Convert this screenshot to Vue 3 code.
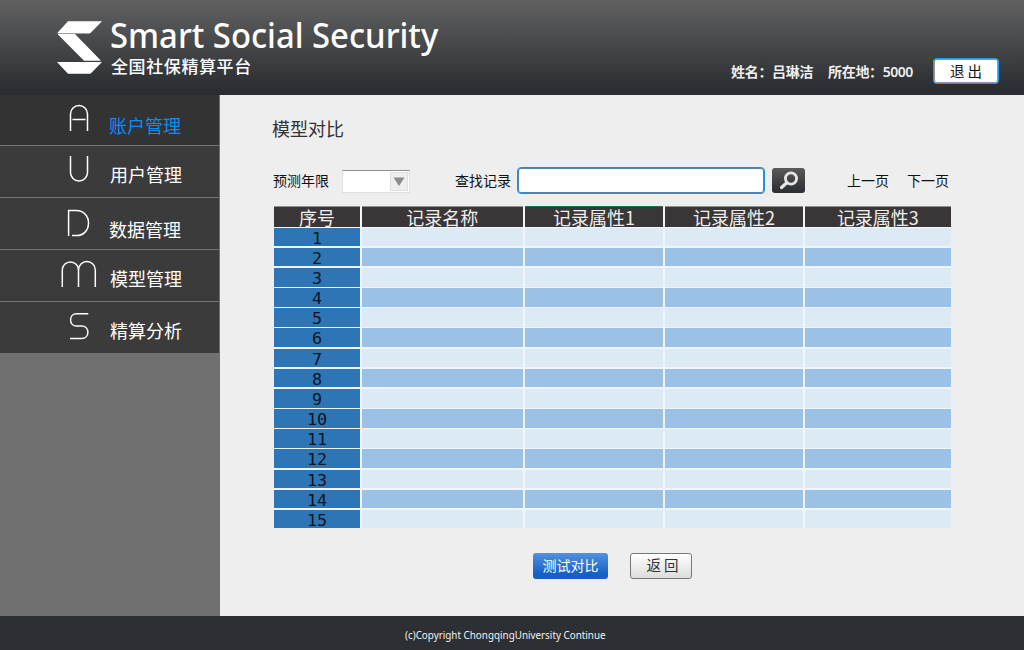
<script setup>
const menu = [
  { key: 'a', label: '账户管理', active: true, path: 'M10.500 27V10a8.500 8.500 0 0 1 17 0V27M12.500 15.500H25.500' },
  { key: 'u', label: '用户管理', path: 'M10.500 0V16.500a8.500 8.500 0 0 0 17 0V0' },
  { key: 'd', label: '数据管理', path: 'M8.600 27V1.600H16C24 1.600 28.500 7 28.500 14S24 26.500 16.500 26.500H12' },
  { key: 'm', label: '模型管理', path: 'M2.300 27V10a8.100 8.100 0 0 1 16.200 0V27M18.500 10a8.400 8.400 0 0 1 16.800 0V27' },
  { key: 's', label: '精算分析', path: 'M28.300 1.800H16.500C8.600 1.800 8.600 14 16.500 14H21.500C30 14 30 26.500 21.500 26.500H10' },
]
const headers = ['序号', '记录名称', '记录属性1', '记录属性2', '记录属性3']
</script>

<template>
  <div class="page">
    <header class="top">
      <svg class="logo" width="48" height="56" viewBox="0 0 48 56">
        <path fill="#fff" d="M12 2.300H46L34.500 14H1.300ZM1.500 15H19L45 41.800H28ZM1 43H46L34.500 54.800H12Z" />
        <path stroke="#a0a0a0" d="M2 14.500H34" />
      </svg>
      <div class="brand">
        <div class="title"><span>Smart Social Security</span></div>
        <div class="sub">全国社保精算平台</div>
      </div>
      <div class="user">
        <span class="name">姓名：吕琳洁</span>
        <span class="place">所在地：<span class="num">5000</span></span>
        <button class="exit">退 出</button>
      </div>
    </header>

    <div class="middle">
      <nav class="side">
        <div v-for="m in menu" :key="m.key" class="item" :class="[m.key, { active: m.active }]">
          <svg class="letter" width="38" height="30" viewBox="0 0 38 30">
            <path :d="m.path" />
          </svg>
          <span class="label">{{ m.label }}</span>
        </div>
      </nav>

      <main class="main">
        <h1>模型对比</h1>
        <div class="tools">
          <span class="t year">预测年限</span>
          <div class="select"><span class="drop"><svg width="12" height="10" viewBox="0 0 12 10"><path d="M.5.500H11.500L6 9Z" fill="#8b8b8b" /></svg></span></div>
          <span class="t find">查找记录</span>
          <input class="search" />
          <button class="go">
            <svg width="33" height="25" viewBox="0 0 33 25" fill="none" stroke="#e6e6e6">
              <circle cx="19" cy="10.500" r="5.600" stroke-width="2.800" />
              <path d="M14.500 15L9.500 19.500" stroke-width="3.200" stroke-linecap="round" />
            </svg>
          </button>
          <span class="t prev">上一页</span>
          <span class="t next">下一页</span>
        </div>

        <div class="table">
          <div class="row head">
            <div v-for="(h, i) in headers" :key="h" class="cell" :class="{ picked: i === 2 }">{{ h }}</div>
          </div>
          <div v-for="n in 15" :key="n" class="row body" :class="{ even: n % 2 === 0 }">
            <div class="cell index"><span>{{ n }}</span></div>
            <div v-for="c in 4" :key="c" class="cell"></div>
          </div>
        </div>

        <div class="actions">
          <button class="test">测试对比</button>
          <button class="back">返 回</button>
        </div>
      </main>
    </div>

    <footer class="foot"><span>(c)Copyright ChongqingUniversity Continue</span></footer>
  </div>
</template>

<style>
body { margin: 0; overflow: hidden; }
</style>

<style scoped>
* { box-sizing: border-box; }
button, input { font: inherit; padding: 0; margin: 0; outline: none; }
.page {
  width: 1024px; height: 650px; display: flex; flex-direction: column;
  font-family: "Noto Sans CJK SC", "Noto Sans", sans-serif; background: #eee; overflow: hidden;
  white-space: nowrap;
}
.top {
  height: 95px; flex: none; display: flex; align-items: flex-start; color: #fff;
  background: linear-gradient(#616161, #2a2d31 95%);
}
.logo { margin: 19px 0 0 56px; }
.brand { margin: 12px 0 0 6px; width: 340px; }
.title { height: 46px; line-height: 46px; font-family: "Noto Sans", "Open Sans", sans-serif; font-size: 34px; font-weight: 500; }
.title span { display: inline-block; transform-origin: 0 50%; transform: scaleX(.965); }
.sub { font-size: 17px; line-height: 22px; letter-spacing: .6px; font-weight: 500; margin: -3px 0 0 1px; }
.user { display: flex; align-items: center; margin: 57px 0 0 281px; height: 27px; font-size: 14px; font-weight: bold; color: #eee; }
.name { width: 97px; letter-spacing: -.3px; }
.place { width: 105px; letter-spacing: -.3px; }
.num { font-family: "Noto Sans", sans-serif; font-weight: 600; letter-spacing: -.5px; }
.exit {
  width: 66px; height: 26px; border: 1.500px solid #139bf5; border-radius: 4px; background: #fff;
  color: #111; font-size: 14.500px; font-weight: 400; line-height: 21px; box-shadow: inset 0 0 0 1px #8f9aa2;
}

.middle { flex: 1; display: flex; min-height: 0; }
.side { width: 220px; background: #707070; padding-right: 1px; }
.item { height: 52px; background: #3b3b3b; border-bottom: 1px solid #737373; display: flex; align-items: flex-start; color: #fff; }
.item.a { height: 51px; background: #333; }
.item.s { border-bottom-color: #707070; }
.item.active { color: #0b8ffb; }
.letter { margin: 10px 0 0 60px; flex: none; fill: none; stroke: #fff; stroke-width: 1.500; }
.a .letter { margin-top: 9px; }
.d .letter { margin-top: 11px; }
.label { font-size: 18px; line-height: 26px; margin: 15px 0 0 12px; }
.a .label { margin: 17px 0 0 11px; }
.d .label { margin: 18px 0 0 11px; }

.main { flex: 1; padding-left: 53px; color: #111; }
h1 { font-size: 18px; font-weight: normal; line-height: 26px; margin: 20px 0 0 -1px; color: #333; }
.tools { display: flex; align-items: center; height: 28px; margin-top: 25px; }
.t { font-size: 14px; line-height: 20px; margin-top: -1px; }
.year { width: 69px; }
.select { width: 68px; height: 23px; margin-top: 2px; background: #fff; border: 1px solid #ddd; border-top-color: #8e8e8e; display: flex; justify-content: flex-end; }
.drop { width: 18px; height: 19px; margin: 1px; background: #eee; border: 1px solid #e0e0e0; display: flex; align-items: center; justify-content: center; padding-top: 2px; }
.find { width: 62px; margin-left: 45px; }
.search { width: 248px; height: 27px; border: 1px solid #1b90e5; border-radius: 4px; background: #fff; box-shadow: inset 0 0 0 1px #4d86b0; }
.go { width: 33px; height: 25px; margin-left: 7px; border: 0; border-radius: 3px; background: linear-gradient(#5a5a5a, #2b2d31); display: flex; }
.prev { margin-left: 42px; width: 60px; }

.table { width: 677px; height: 322px; margin: 12px 0 0 1px; overflow: hidden; }
.row { display: grid; grid-template-columns: 86px 161.500px 138.500px 138.500px 146px; column-gap: 1.600px; height: 20.180px; background: #eff5fb; }
.head { height: 21.500px; padding-bottom: 1.500px; background: #f3f6f8; }
.head .cell { background: #3a3637; border-top: 1px solid #8e8e8e; color: #eee; font-size: 18px; line-height: 20px; text-align: center; }
.head .picked { border-top-color: #1e7544; }
.body { padding-bottom: 1.500px; }
.body .cell { background: #dceaf6; }
.body.even .cell { background: #9bc1e6; }
.body .index, .body.even .index { background: #2e75b6; color: #0b1520; text-align: center; }
.index span { display: block; font-family: "DejaVu Sans Mono", "Liberation Mono", monospace; font-size: 15px; line-height: 18.500px; height: 18px; padding-top: 2px; transform: scaleX(1.12); }

.actions { display: flex; margin: 25px 0 0 260px; }
.test { width: 75px; height: 26px; border: 0; border-radius: 3px; background: linear-gradient(#5591dc, #1560c6 80%); color: #fff; font-size: 14px; line-height: 24px; padding-bottom: 2px; }
.back { width: 62px; height: 26px; margin-left: 22px; border: 1px solid #777; border-radius: 3px; background: linear-gradient(#fff, #dcdcdc); color: #333; font-size: 14.500px; line-height: 22px; padding: 0 0 2px 3px; }

.foot { height: 34px; flex: none; background: #2c2f33; color: #f2f2f2; font-family: "Noto Sans", "Open Sans", sans-serif; font-size: 11px; line-height: 38px; padding-left: 405px; }
.foot span { display: inline-block; transform-origin: 0 50%; transform: scaleX(.895); }
</style>
